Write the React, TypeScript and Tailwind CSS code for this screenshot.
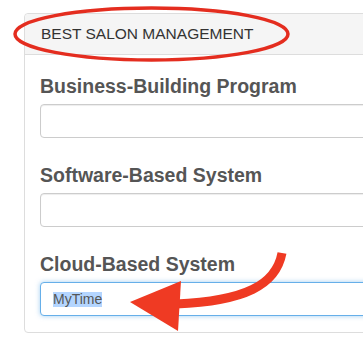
import React from "react";

function Field({ label, value, focused }: { label: string; value?: string; focused?: boolean }) {
  return (
    <div className="mb-[25px] last:mb-0">
      <div className="text-[19.5px] leading-[24px] font-bold text-[#555] mb-[6px]">{label}</div>
      <div
        className={
          "h-[34px] rounded-[4px] border flex items-center pl-[12px] text-[14px] text-[#555] bg-white " +
          (focused
            ? "border-[#66afe9] shadow-[0_0_5px_rgba(102,175,233,0.6)]"
            : "border-[#ccc] shadow-[inset_0_1px_1px_rgba(0,0,0,0.075)]")
        }
      >
        {value ? <span className="bg-[#b4d5fe] leading-[15px]">{value}</span> : null}
      </div>
    </div>
  );
}

export default function App() {
  return (
    <div
      className="relative w-[363px] h-[347px] overflow-hidden bg-white"
      style={{ fontFamily: '"Liberation Sans", Arial, sans-serif' }}
    >
      <div className="pt-[13px] pl-[24px]">
        <div className="w-[420px] border border-[#ddd] rounded-[4px] bg-white">
          <div className="h-[41px] bg-[#f5f5f5] border-b border-[#ddd] flex items-center pl-[16px] text-[15.5px] text-[#333] rounded-t-[4px]">
            BEST SALON MANAGEMENT
          </div>
          <div className="pt-[19px] pb-[16px] pl-[15px]">
            <Field label="Business-Building Program" />
            <Field label="Software-Based System" />
            <Field label="Cloud-Based System" value="MyTime" focused />
          </div>
        </div>
      </div>
      <svg className="absolute inset-0 pointer-events-none" width="363" height="347" viewBox="0 0 363 347">
        <ellipse cx="151.5" cy="34" rx="136.5" ry="26" fill="none" stroke="#e42d1f" strokeWidth="3.5" />
        <path d="M 282 253 C 276 285, 245 301, 176 304" fill="none" stroke="#ef3a23" strokeWidth="9" />
        <polygon points="130,302 181,281 178,331" fill="#ef3a23" />
      </svg>
    </div>
  );
}
